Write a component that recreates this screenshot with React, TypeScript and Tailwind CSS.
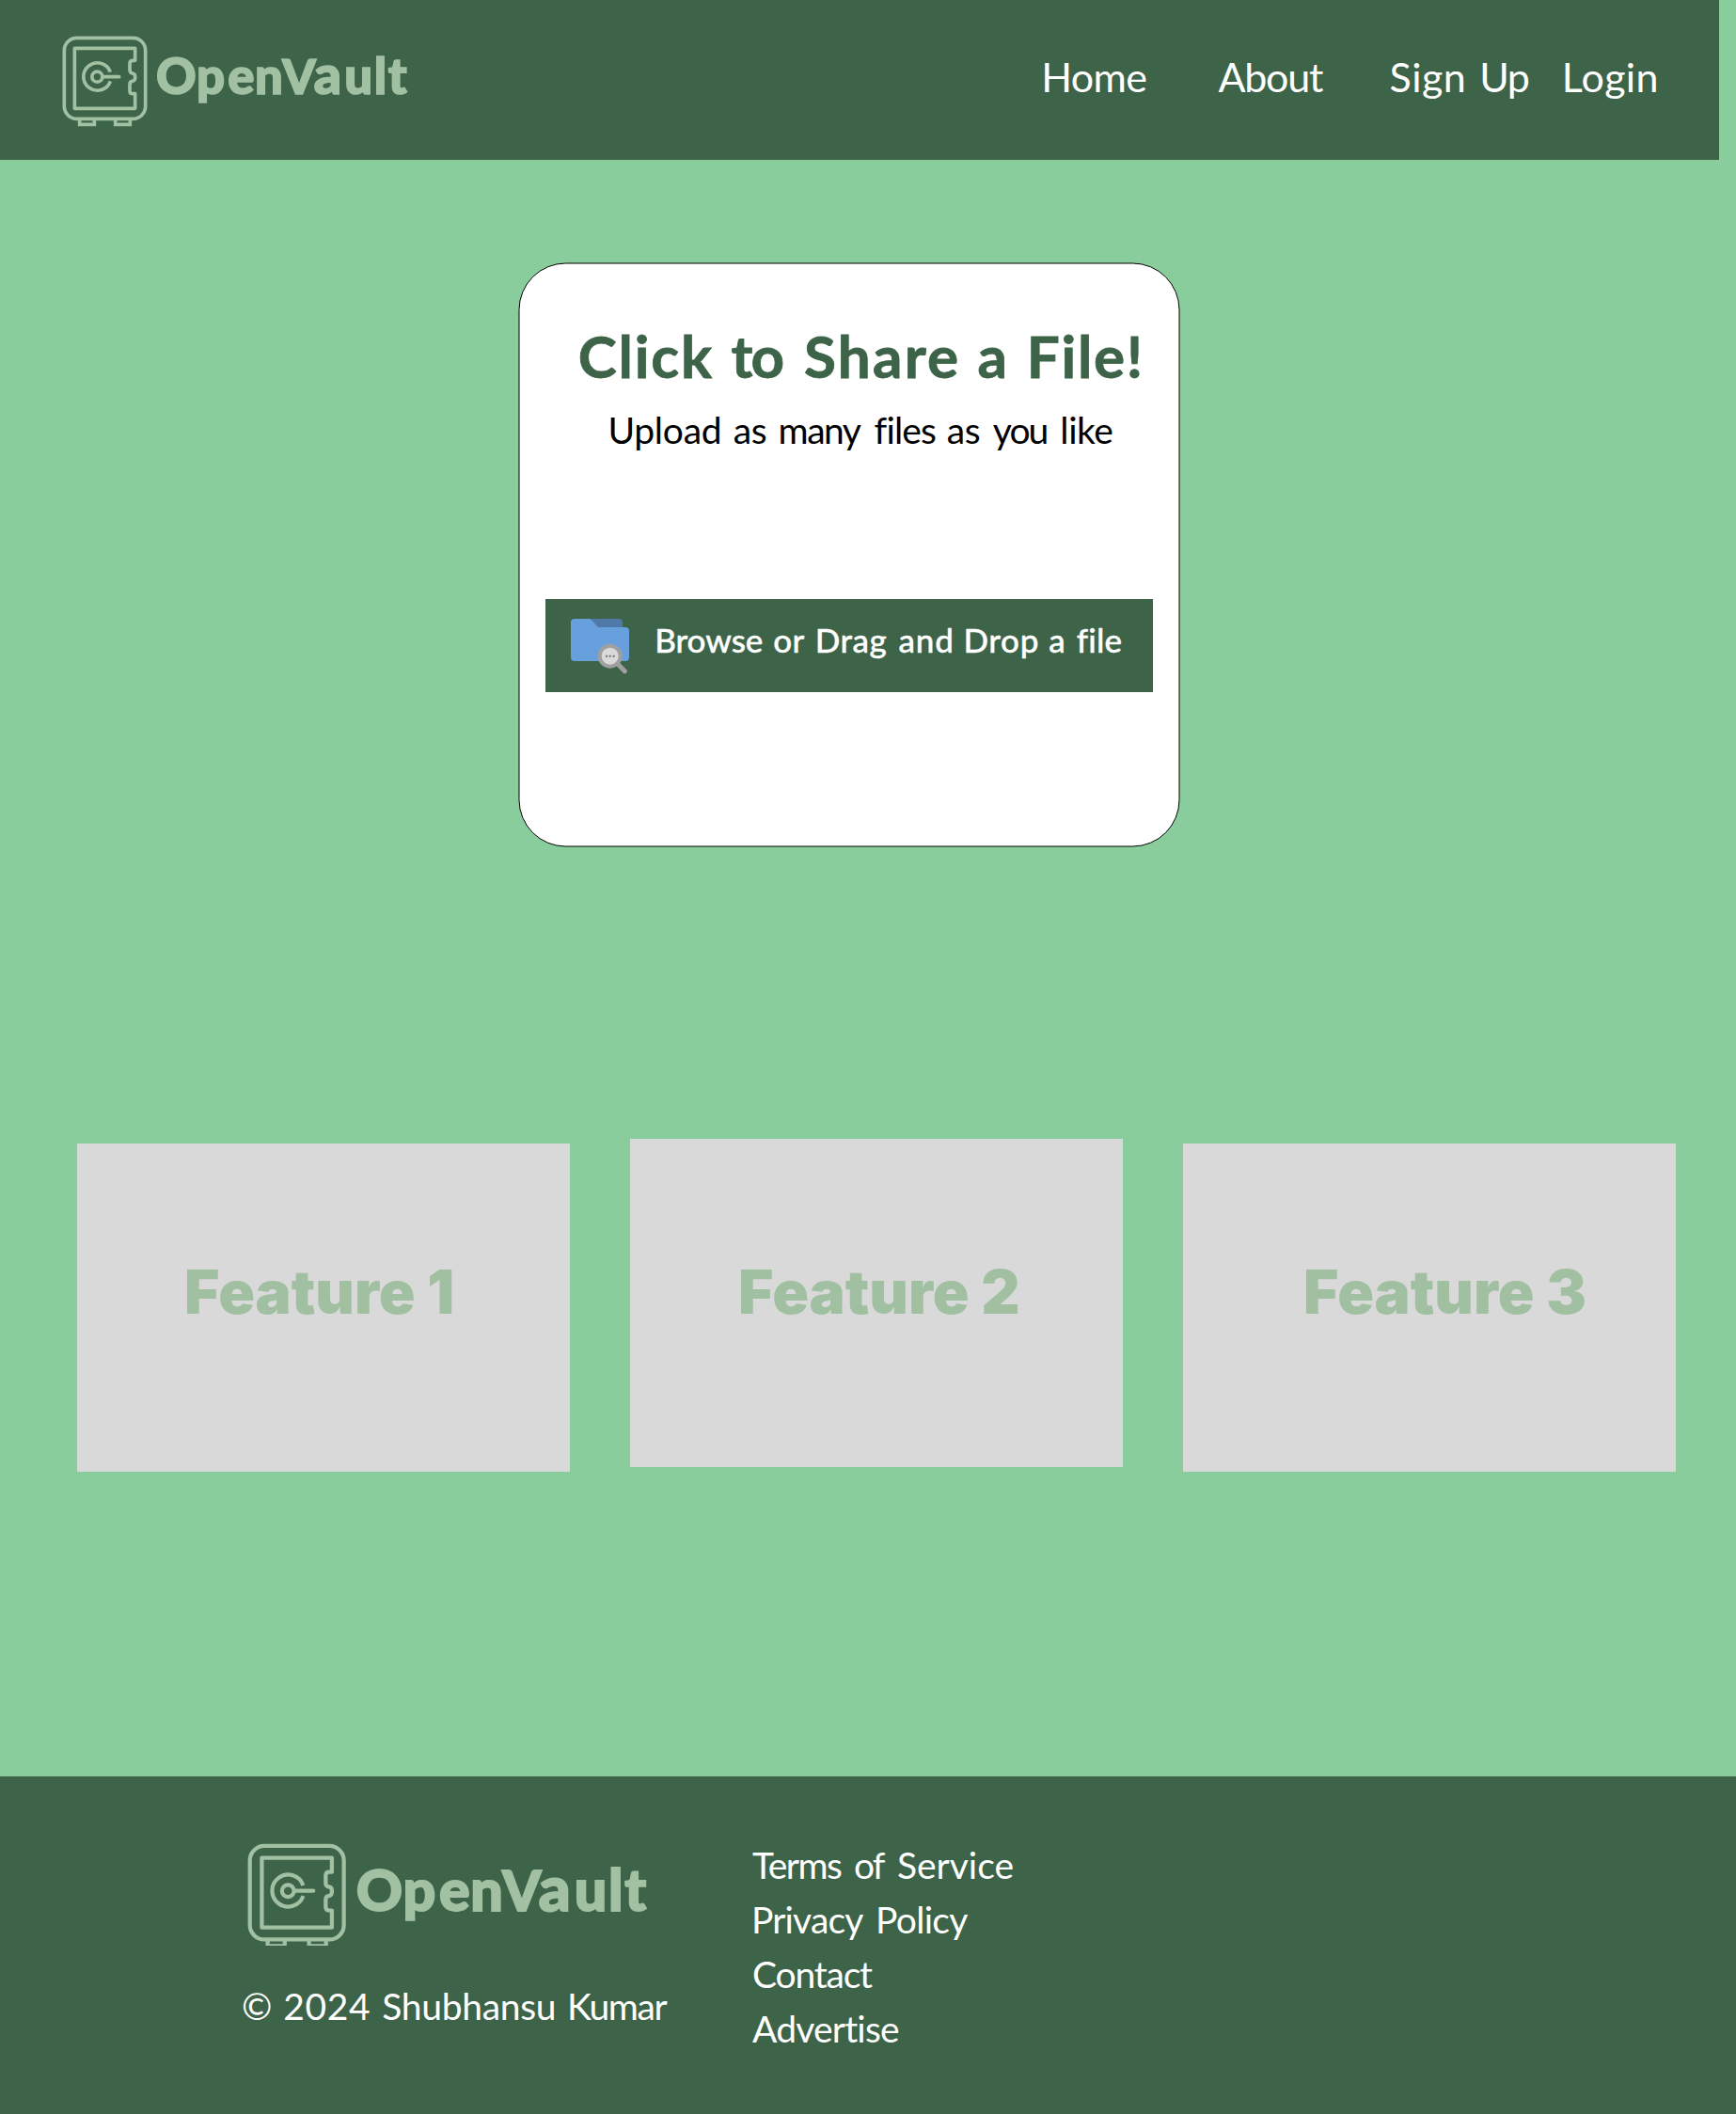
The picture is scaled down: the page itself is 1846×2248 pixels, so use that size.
type WordSpec = [text: string, className: string];

/** A line of text whose words each carry their own tracking and advance. */
function Line({ words, className = "" }: { words: WordSpec[]; className?: string }) {
  return (
    <span className={`flex whitespace-pre ${className}`}>
      {words.map(([text, cls], i) => (
        <span key={i} className={`shrink-0 ${cls}`}>
          {text}
        </span>
      ))}
    </span>
  );
}

function Logo({ className, viewBox }: { className: string; viewBox: string }) {
  return (
    <svg className={`block shrink-0 ${className}`} viewBox={viewBox} fill="none" role="img" aria-label="OpenVault">
      <g stroke="#a2c1a3" strokeWidth="11">
        <rect x="55" y="61" width="259" height="258" rx="40" />
        <path
          strokeLinejoin="round"
          d="M281 94V133H274Q264 133 264 143V163Q264 172 272 174Q281 175 281 184V188Q281 197 272 199Q264 200 264 209V230Q264 239 274 239H281V286H88V94Z"
        />
        <path d="M202 170A44 44 0 1 0 202 199" />
        <circle cx="160" cy="185" r="16.5" />
        <path d="M178 185H230" strokeLinecap="round" />
        <path d="M104 322V337H151V322M218 322V337H265V322" />
      </g>
      <text
        x="348 477 577 663 751 851 949 1043 1088"
        y="241"
        fill="#a2c1a3"
        stroke="#a2c1a3"
        strokeWidth="5"
        fontFamily="Lato, sans-serif"
        fontWeight="900"
        fontSize="158"
      >
        Open<tspan fontSize="152">V</tspan>
        <tspan fontSize="172">a</tspan>ult
      </text>
    </svg>
  );
}

function FolderSearchIcon() {
  return (
    <svg className="mt-[21px] block h-[59px] w-[62px] shrink-0" viewBox="36 39 186 177" fill="none">
      <path d="M90 39H189Q201 39 201 51V80H90Z" fill="#4e79a8" />
      <path
        d="M48 39H92Q99 39 103 44L120 63Q122 66 126 66H210Q222 66 222 78V162Q222 174 210 174H48Q36 174 36 162V51Q36 39 48 39Z"
        fill="#68a0de"
      />
      <path d="M186 184L208 206" stroke="#a0a0a0" strokeWidth="15" strokeLinecap="round" />
      <circle cx="161" cy="158" r="33" fill="#dadada" stroke="#a0a0a0" strokeWidth="12" />
      <path d="M147 155h6v6h-6zM158 155h6v6h-6zM170 155h6v6h-6z" fill="#707070" />
    </svg>
  );
}

function Feature({ label, className }: { label: string; className: string }) {
  return (
    <div className={`h-[349px] w-[524px] shrink-0 bg-[#d9d9d9] ${className}`}>
      <h2 className="whitespace-nowrap font-['Inter'] text-[64px] leading-[77px] font-black text-[#a1c0a1]">
        {label}
      </h2>
    </div>
  );
}

export default function App() {
  return (
    <div className="flex h-[2248px] w-[1846px] flex-col overflow-hidden bg-[#88cd9b] font-['Lato',sans-serif]">
      <header className="flex h-[170px] w-[1828px] shrink-0 bg-[#3d6348] pl-[66px] text-white">
        <Logo className="mt-[37px] h-[98px] w-[368px]" viewBox="48 51 1104 294" />
        <nav className="ml-[673.3px] flex pt-14 text-[43px] leading-[51px]">
          <a className="w-[188.1px] tracking-[-0.67px]">Home</a>
          <a className="w-[182.2px] tracking-[-1.2px]">About</a>
          <a className="w-[183.2px]">
            <Line
              words={[
                ["Sign ", "w-[95.7px] tracking-[0.46px]"],
                ["Up", "tracking-[-1.58px]"],
              ]}
            />
          </a>
          <a className="tracking-[0.31px]">Login</a>
        </nav>
      </header>

      <main className="flex flex-1 flex-col">
        <section className="relative mt-[109px] ml-[551px] h-[622px] w-[704px] pt-px pl-px">
          <div className="absolute top-0 left-0 h-[621px] w-[703px] translate-x-[0.5px] translate-y-[0.5px] rounded-[50px] border border-black bg-white" />
          <div className="relative">
            <h1 className="mt-[61px] ml-[62.8px] text-[62px] leading-[74px] font-bold text-[#3d6348] [-webkit-text-stroke:0.8px_#3d6348]">
              <Line
                words={[
                  ["Click ", "w-[162.6px] tracking-[1.76px]"],
                  ["to ", "w-[77.7px] tracking-[-1.82px]"],
                  ["Share ", "w-[184.4px] tracking-[2.19px]"],
                  ["a ", "w-[52.4px]"],
                  ["File!", "tracking-[1.65px]"],
                ]}
              />
            </h1>
            <p className="mt-[19px] ml-[94.4px] text-[39px] leading-[46px] text-black">
              <Line
                words={[
                  ["Upload ", "w-[133.3px] tracking-[-0.25px]"],
                  ["as ", "w-[47.9px] tracking-[-0.38px]"],
                  ["many ", "w-[102px] tracking-[-1.5px]"],
                  ["files ", "w-[77.2px] tracking-[-0.86px]"],
                  ["as ", "w-[49px] tracking-[-0.38px]"],
                  ["you ", "w-[71.6px] tracking-[-1.94px]"],
                  ["like", "tracking-[-0.42px]"],
                ]}
              />
            </p>
            <button className="mt-[157px] ml-7 flex h-[99px] w-[646px] items-start bg-[#3d6348] pl-[27px] text-white">
              <FolderSearchIcon />
              <Line
                className="mt-[22px] ml-[27.2px] text-[35px] leading-[42px] font-medium [-webkit-text-stroke:0.4px_#ffffff]"
                words={[
                  ["Browse ", "w-[126.1px] text-left tracking-[-0.05px]"],
                  ["or ", "w-[44.5px] text-left tracking-[0.29px]"],
                  ["Drag ", "w-[88.6px] text-left tracking-[0.47px]"],
                  ["and ", "w-[69px] text-left tracking-[0.87px]"],
                  ["Drop ", "w-[90.8px] text-left tracking-[0.65px]"],
                  ["a ", "w-[29.5px] text-left"],
                  ["file", "tracking-[0.22px]"],
                ]}
              />
            </button>
          </div>
        </section>

        <section className="mt-[310px] ml-[82px] flex items-start gap-16">
          <Feature label="Feature 1" className="mt-[5px] pt-[119px] pl-[114px]" />
          <Feature label="Feature 2" className="pt-[124px] pl-[115px]" />
          <Feature label="Feature 3" className="mt-[5px] pt-[119px] pl-[128px]" />
        </section>
      </main>

      <footer className="flex h-[359px] shrink-0 bg-[#3d6348] text-[39px] text-white">
        <div className="w-[800px] pt-[70px] pl-[257px]">
          <Logo className="ml-[6px] h-[110px] w-[426px]" viewBox="48 51 1104 285" />
          <p className="mt-[41px] leading-[46px]">
            <Line
              words={[
                ["© ", "w-[44.3px]"],
                ["2024 ", "w-[105px] tracking-[0.61px]"],
                ["Shubhansu ", "w-[196.7px] tracking-[-0.32px]"],
                ["Kumar", "tracking-[-1.4px]"],
              ]}
            />
          </p>
        </div>
        <nav className="flex flex-col pt-[65px] leading-[58px]">
          <Line
            words={[
              ["Terms ", "w-[108px] tracking-[-1.53px]"],
              ["of ", "w-[46px] tracking-[-1.98px]"],
              ["Service", "tracking-[-0.03px]"],
            ]}
          />
          <Line
            className="-ml-px"
            words={[
              ["Privacy ", "w-[132px] tracking-[-0.83px]"],
              ["Policy", "tracking-[-0.68px]"],
            ]}
          />
          <a className="tracking-[-1.2px]">Contact</a>
          <a className="tracking-[-0.8px]">Advertise</a>
        </nav>
      </footer>
    </div>
  );
}
